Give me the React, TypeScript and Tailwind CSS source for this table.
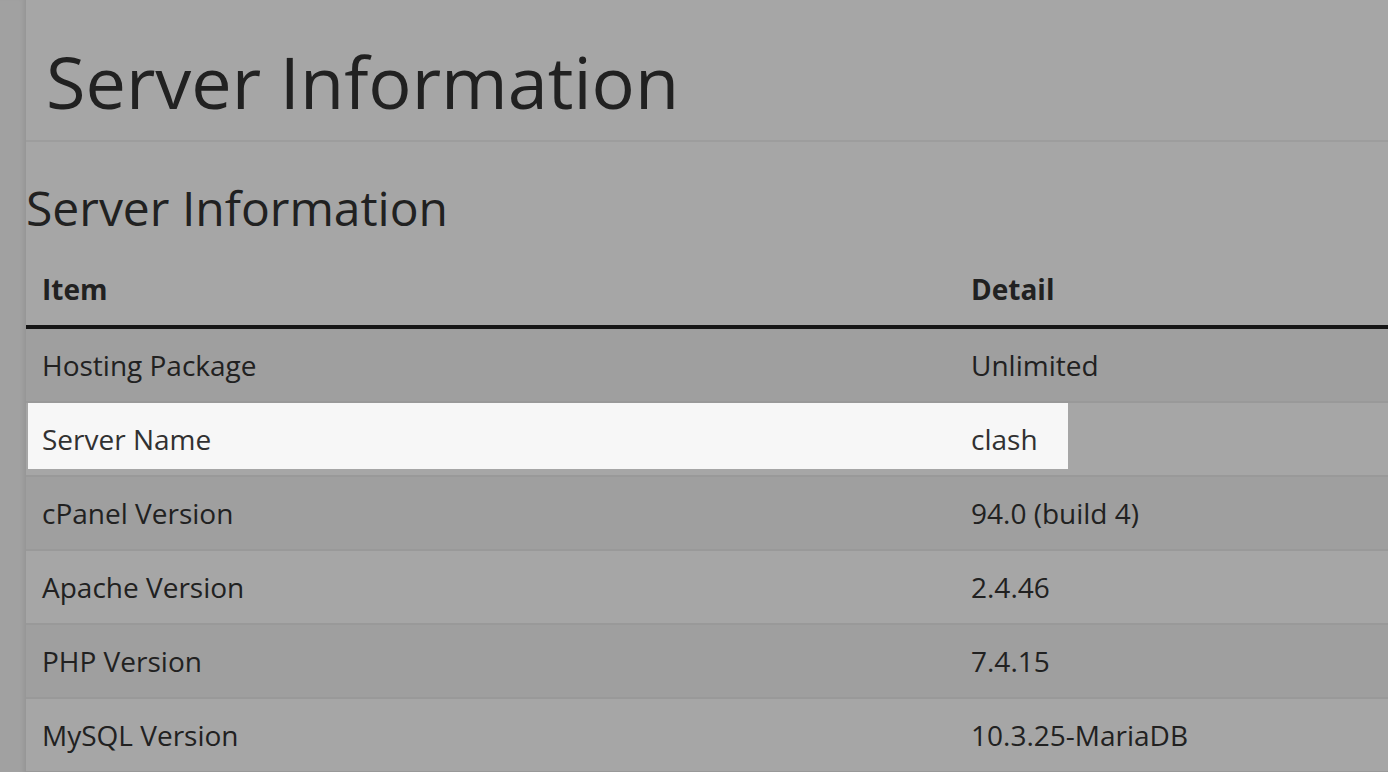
const rows = [
  { item: 'Hosting Package', detail: 'Unlimited' },
  { item: 'Server Name', detail: 'clash', spotlight: true },
  { item: 'cPanel Version', detail: '94.0 (build 4)' },
  { item: 'Apache Version', detail: '2.4.46' },
  { item: 'PHP Version', detail: '7.4.15' },
  { item: 'MySQL Version', detail: '10.3.25-MariaDB' },
]

export default function App() {
  return (
    <div
      className="flex min-h-[772px] bg-white text-[#333] overflow-hidden"
      style={{ fontFamily: '"Open Sans", "Noto Sans", sans-serif' }}
    >
      <div className="w-[26px] shrink-0 bg-[#f7f7f7] shadow-[inset_-5px_0_5px_-3px_rgba(0,0,0,0.08)]" />

      <div className="flex-1 min-w-0">
        <div className="border-b-2 border-[#f1f1f1] pl-[20px] pt-[42px] pb-[19px]">
          <h1 className="text-[72px] leading-[79px] font-normal">
            Server Information
          </h1>
        </div>

        <h2 className="text-[48px] leading-[53px] font-normal mt-[39px] mb-[18px]">
          Server Information
        </h2>

        <div className="text-[28px] leading-[42px]">
          <div className="grid grid-cols-[929px_1fr] border-b-4 border-[#222] font-bold">
            <div className="px-4 pt-4 pb-[15px]">Item</div>
            <div className="px-4 pt-4 pb-[15px]">Detail</div>
          </div>

          {rows.map((row, index) => (
            <div
              key={row.item}
              className={`relative grid grid-cols-[929px_1fr] border-b-2 border-[#ebebeb] ${
                index % 2 === 0 ? 'bg-[#f4f4f4]' : 'bg-white'
              }`}
            >
              {row.spotlight && (
                <div className="absolute left-[2px] top-0 w-[1040px] h-[66px] z-10 bg-[rgba(0,0,0,0.03)] shadow-[0_0_0_9999px_rgba(0,0,0,0.35)] pointer-events-none" />
              )}
              <div className="px-4 py-[15px]">{row.item}</div>
              <div className="px-4 py-[15px]">{row.detail}</div>
            </div>
          ))}
        </div>
      </div>
    </div>
  )
}
